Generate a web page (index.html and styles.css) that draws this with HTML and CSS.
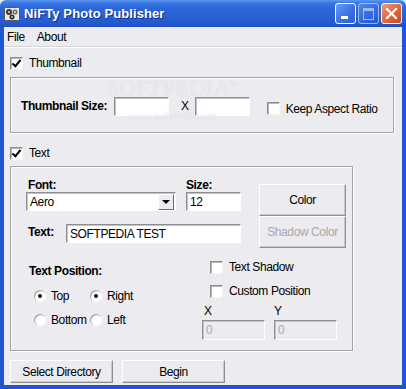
FILE: index.html
```html
<!DOCTYPE html>
<html lang="en">
<head>
    <meta charset="UTF-8">
    <title>NiFTy Photo Publisher</title>
    <link rel="stylesheet" href="styles.css">
</head>
<body>
<div class="window">
    <!-- Title bar -->
    <div class="titlebar">
        <svg class="appIcon" width="16" height="16" viewBox="0 0 16 16">
            <rect x="0.5" y="1.5" width="15" height="13" rx="1" fill="#e8e8e8" stroke="#5a5a5a"/>
            <circle cx="5" cy="6" r="3" fill="#3a3a3a"/>
            <circle cx="11" cy="6" r="2.5" fill="#6a6a6a"/>
            <circle cx="8" cy="11" r="2.5" fill="#2a2a2a"/>
            <circle cx="5" cy="6" r="1" fill="#dcdcdc"/>
            <circle cx="11" cy="6" r="0.9" fill="#f0f0f0"/>
            <circle cx="8" cy="11" r="0.9" fill="#cfcfcf"/>
        </svg>
        <span class="titleText">NiFTy Photo Publisher</span>
        <div class="captionBtns">
            <div class="capBtn minBtn"><span class="minBar"></span></div>
            <div class="capBtn maxBtn"><span class="maxBox"></span></div>
            <div class="capBtn closeBtn">
                <svg width="21" height="21" viewBox="0 0 21 21">
                    <path d="M6 6 L15 15 M15 6 L6 15" stroke="#fff" stroke-width="2.2" stroke-linecap="square"/>
                </svg>
            </div>
        </div>
    </div>

    <div class="client">
        <div class="menubar">
            <span class="menuItem">File</span>
            <span class="menuItem">About</span>
        </div>

        <div class="content">
            <div class="checkRow topRow">
                <span class="checkbox checked"></span>
                <span>Thumbnail</span>
            </div>

            <div class="groupBox thumbGroup">
                <span class="boldLabel">Thumbnail Size:</span>
                <span class="textBox sizeBox first"></span>
                <span class="times">X</span>
                <span class="textBox sizeBox"></span>
                <span class="checkbox aspectBox"></span>
                <span class="aspectLabel">Keep Aspect Ratio</span>
            </div>

            <div class="checkRow textRow">
                <span class="checkbox checked"></span>
                <span>Text</span>
            </div>

            <div class="groupBox textGroup">
                <div class="topSection">
                    <div class="fieldsPart">
                        <div class="labelRow">
                            <span class="boldLabel fontLabel">Font:</span>
                            <span class="boldLabel">Size:</span>
                        </div>
                        <div class="controlRow">
                            <div class="selectBox">
                                <span class="selectText">Aero</span>
                                <span class="dropBtn"><span class="arrow"></span></span>
                            </div>
                            <span class="textBox fontSize">12</span>
                        </div>
                        <div class="textEntryRow">
                            <span class="boldLabel textLabel">Text:</span>
                            <span class="textBox textInput">SOFTPEDIA TEST</span>
                        </div>
                    </div>
                    <div class="colorBtns">
                        <div class="button colorBtn">Color</div>
                        <div class="button colorBtn disabled">Shadow Color</div>
                    </div>
                </div>

                <div class="bottomSection">
                    <div class="positionPart">
                        <div class="boldLabel posLabel">Text Position:</div>
                        <div class="radioGrid">
                            <div class="radioItem"><span class="radio on"></span>Top</div>
                            <div class="radioItem"><span class="radio on"></span>Right</div>
                            <div class="radioItem"><span class="radio"></span>Bottom</div>
                            <div class="radioItem"><span class="radio"></span>Left</div>
                        </div>
                    </div>
                    <div class="optionsPart">
                        <div class="checkRow optRow">
                            <span class="checkbox"></span>
                            <span>Text Shadow</span>
                        </div>
                        <div class="checkRow optRow second">
                            <span class="checkbox"></span>
                            <span>Custom Position</span>
                        </div>
                        <div class="xyLabels">
                            <span class="xLabel">X</span>
                            <span class="yLabel">Y</span>
                        </div>
                        <div class="xyInputs">
                            <span class="textBox xyBox">0</span>
                            <span class="textBox xyBox">0</span>
                        </div>
                    </div>
                </div>
            </div>

            <div class="actionRow">
                <div class="button actionBtn">Select Directory</div>
                <div class="button actionBtn">Begin</div>
            </div>
        </div>
    </div>

    <!-- watermark -->
    <div class="watermark">SOFTPEDIA<sup>™</sup></div>
    <div class="watermarkUrl">www.softpedia.com</div>
</div>
</body>
</html>
```

FILE: styles.css
```css
body {
    margin: 0;
    width: 406px;
    height: 389px;
    overflow: hidden;
    font-family: "Liberation Sans", Arial, sans-serif;
    font-size: 12px;
    letter-spacing: -0.4px;
    color: #000;
}

.window {
    position: relative;
    width: 406px;
    height: 389px;
    display: flex;
    flex-direction: column;
    background-color: #ecebef;
    white-space: nowrap;
}

/* ---------- title bar ---------- */
.titlebar {
    height: 27px;
    flex: none;
    display: flex;
    align-items: center;
    padding-left: 4px;
    background: linear-gradient(#5b96ee 0px, #3a78e2 3px, #2c66d8 8px, #2860d3 18px, #2358cc 24px, #1d4fc2 27px);
    border-radius: 6px 6px 0 0;
}
.appIcon {
    flex: none;
}
.titleText {
    margin-left: 4px;
    color: #fff;
    font-weight: bold;
    font-size: 13px;
    letter-spacing: 0.1px;
    text-shadow: 1px 1px 0 #0d2f8a;
}
.captionBtns {
    margin-left: auto;
    margin-right: 4px;
    display: flex;
    gap: 2px;
}
.capBtn {
    position: relative;
    width: 19px;
    height: 19px;
    border: 1px solid #fff;
    border-radius: 3px;
    background: linear-gradient(135deg, #6a9cf4, #3c72e4 55%, #2b5fd6);
}
.minBar {
    position: absolute;
    left: 5px;
    top: 12px;
    width: 7px;
    height: 3px;
    background: #fff;
}
.maxBtn {
    opacity: 0.55;
}
.maxBox {
    position: absolute;
    left: 4px;
    top: 4px;
    width: 9px;
    height: 8px;
    border: 1px solid #fff;
    border-top-width: 3px;
}
.closeBtn {
    background: linear-gradient(135deg, #f09878, #df6a3f 50%, #c9461e);
}
.closeBtn svg {
    position: absolute;
    left: -1px;
    top: -1px;
}

/* ---------- client frame ---------- */
.client {
    flex: 1;
    border-left: 4px solid #1f56d0;
    border-right: 4px solid #1f56d0;
    border-bottom: 4px solid #1f56d0;
    display: flex;
    flex-direction: column;
}
.menubar {
    height: 19px;
    display: flex;
    align-items: center;
    padding-left: 3px;
    border-bottom: 1px solid #d4d3d8;
    box-shadow: 0 1px 0 #ffffff;
}
.menuItem {
    margin-right: 12px;
}
.content {
    padding-left: 6px;
}

/* ---------- checkbox / radio ---------- */
.checkRow {
    height: 18px;
    display: flex;
    align-items: center;
}
.checkRow .checkbox {
    margin-right: 6px;
}
.topRow {
    margin-top: 7px;
}
.textRow {
    margin-top: 11px;
}
.checkbox {
    position: relative;
    display: inline-block;
    flex: none;
    width: 11px;
    height: 11px;
    background: #fff;
    border: 1px solid;
    border-color: #8c8c8c #f4f4f4 #f4f4f4 #8c8c8c;
    box-shadow: inset 1px 1px 0 #b8b8b8;
}
.checkbox.checked::after {
    content: "";
    position: absolute;
    left: 3px;
    top: 0px;
    width: 3px;
    height: 7px;
    border-right: 2px solid #000;
    border-bottom: 2px solid #000;
    transform: rotate(40deg);
}
.radio {
    position: relative;
    display: inline-block;
    flex: none;
    width: 12px;
    height: 12px;
    border-radius: 50%;
    background: radial-gradient(circle at 60% 60%, #ffffff 40%, #e0e0e0 80%);
    box-shadow: inset 1px 1px 0 #a8a8a8, inset -1px -1px 0 #ffffff;
    margin-right: 5px;
}
.radio.on::after {
    content: "";
    position: absolute;
    left: 4px;
    top: 4px;
    width: 4px;
    height: 4px;
    border-radius: 50%;
    background: #111;
}

/* ---------- group boxes ---------- */
.groupBox {
    box-sizing: border-box;
    border: 1px solid #a3a2a6;
    box-shadow: inset 1px 1px 0 #ffffff, 1px 1px 0 #ffffff;
}
.thumbGroup {
    margin-top: 5px;
    width: 384px;
    height: 56px;
    display: flex;
    align-items: center;
    padding-left: 10px;
    padding-top: 2px;
}
.boldLabel {
    font-weight: bold;
    flex: none;
}
.textBox {
    box-sizing: border-box;
    display: inline-flex;
    align-items: center;
    flex: none;
    height: 19px;
    padding-left: 3px;
    background: #fff;
    border: 1px solid;
    border-color: #8e8d92 #ffffff #ffffff #8e8d92;
    box-shadow: inset 1px 1px 0 #c4c3c8;
}
.sizeBox {
    width: 55px;
}
.sizeBox.first {
    margin-left: 7px;
}
.times {
    margin: 0 6px 0 12px;
}
.aspectBox {
    margin-left: 17px;
    margin-top: 4px;
}
.aspectLabel {
    margin-left: 6px;
    margin-top: 5px;
}

/* ---------- text group ---------- */
.textGroup {
    margin-top: 4px;
    width: 343px;
    height: 185px;
    padding: 10px 0 0 15px;
}
.topSection {
    display: flex;
    align-items: flex-start;
}
.fieldsPart {
    width: 224px;
}
.labelRow {
    height: 15px;
    display: flex;
    align-items: center;
}
.fontLabel {
    margin-left: 2px;
    width: 158px;
}
.controlRow {
    display: flex;
    gap: 10px;
}
.selectBox {
    box-sizing: border-box;
    width: 150px;
    height: 19px;
    display: flex;
    align-items: center;
    background: #fff;
    border: 1px solid;
    border-color: #8e8d92 #ffffff #ffffff #8e8d92;
    box-shadow: inset 1px 1px 0 #c4c3c8;
}
.selectText {
    padding-left: 3px;
    flex: 1;
}
.dropBtn {
    box-sizing: border-box;
    width: 16px;
    height: 16px;
    margin-right: 1px;
    display: flex;
    align-items: center;
    justify-content: center;
    background: #ecebef;
    border: 1px solid;
    border-color: #ffffff #6e6e6e #6e6e6e #ffffff;
}
.arrow {
    width: 0;
    height: 0;
    border-left: 4px solid transparent;
    border-right: 4px solid transparent;
    border-top: 4px solid #000;
    margin-top: 1px;
}
.fontSize {
    width: 55px;
}
.textEntryRow {
    margin-top: 13px;
    display: flex;
    align-items: center;
}
.textLabel {
    margin-left: 2px;
    width: 38px;
    margin-top: -4px;
}
.textInput {
    width: 175px;
}
.colorBtns {
    margin-top: 7px;
    margin-left: 9px;
    display: flex;
    flex-direction: column;
}
.button {
    box-sizing: border-box;
    display: flex;
    align-items: center;
    justify-content: center;
    background: #ecebef;
    border: 1px solid;
    border-color: #ffffff #8f8e93 #8f8e93 #ffffff;
    box-shadow: inset -1px -1px 0 #c9c8cc;
}
.colorBtn {
    width: 87px;
    height: 32px;
}
.colorBtn.disabled {
    color: #a9a8ad;
}

.bottomSection {
    margin-top: 10px;
    display: flex;
}
.positionPart {
    width: 176px;
}
.posLabel {
    margin-top: 6px;
    margin-left: 3px;
    height: 14px;
    line-height: 14px;
}
.radioGrid {
    margin-top: 9px;
    margin-left: 8px;
    display: grid;
    grid-template-columns: 56px auto;
    row-gap: 6px;
}
.radioItem {
    height: 18px;
    display: flex;
    align-items: center;
}
.optionsPart {
    width: 140px;
}
.optRow {
    margin-left: 8px;
}
.optRow.second {
    margin-top: 6px;
}
.xyLabels {
    margin-top: 4px;
    height: 14px;
    line-height: 14px;
    display: flex;
}
.xLabel {
    margin-left: 2px;
    width: 70px;
}
.xyInputs {
    margin-top: 2px;
    display: flex;
    gap: 9px;
}
.xyBox {
    width: 63px;
    height: 20px;
    background: #ecebef;
    color: #a9a8ad;
}

/* ---------- bottom buttons ---------- */
.actionRow {
    margin-top: 9px;
    display: flex;
    gap: 9px;
}
.actionBtn {
    width: 103px;
    height: 23px;
}

/* ---------- watermark ---------- */
.watermark {
    position: absolute;
    left: 107px;
    top: 79px;
    line-height: 18px;
    font-family: "Liberation Serif", serif;
    font-size: 22px;
    letter-spacing: 0.5px;
    color: rgba(255, 255, 255, 0.55);
    text-shadow: 0 0 1px rgba(150, 150, 150, 0.35);
}
.watermark sup {
    font-size: 8px;
    line-height: 0;
}
.watermarkUrl {
    position: absolute;
    left: 128px;
    top: 110px;
    line-height: 10px;
    font-family: "Liberation Serif", serif;
    font-size: 11px;
    letter-spacing: 0;
    color: rgba(255, 255, 255, 0.6);
    text-shadow: 0 0 1px rgba(150, 150, 150, 0.35);
}
```
